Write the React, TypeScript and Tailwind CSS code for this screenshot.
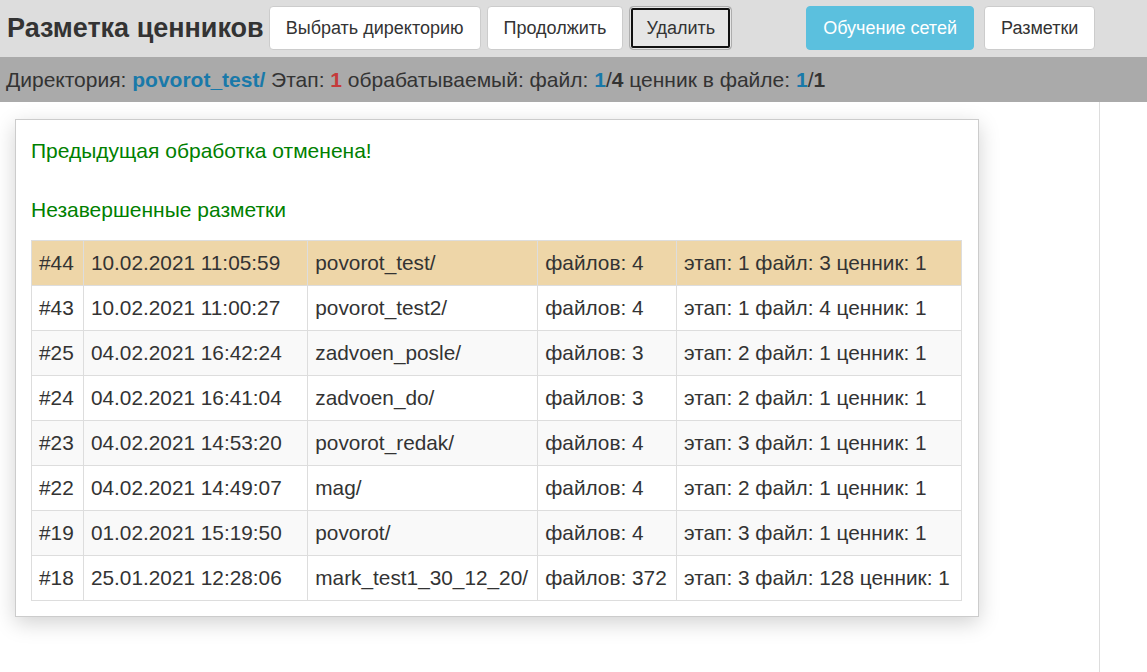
import React from 'react';

const rows = [
  ['#44', '10.02.2021 11:05:59', 'povorot_test/', 'файлов: 4', 'этап: 1 файл: 3 ценник: 1'],
  ['#43', '10.02.2021 11:00:27', 'povorot_test2/', 'файлов: 4', 'этап: 1 файл: 4 ценник: 1'],
  ['#25', '04.02.2021 16:42:24', 'zadvoen_posle/', 'файлов: 3', 'этап: 2 файл: 1 ценник: 1'],
  ['#24', '04.02.2021 16:41:04', 'zadvoen_do/', 'файлов: 3', 'этап: 2 файл: 1 ценник: 1'],
  ['#23', '04.02.2021 14:53:20', 'povorot_redak/', 'файлов: 4', 'этап: 3 файл: 1 ценник: 1'],
  ['#22', '04.02.2021 14:49:07', 'mag/', 'файлов: 4', 'этап: 2 файл: 1 ценник: 1'],
  ['#19', '01.02.2021 15:19:50', 'povorot/', 'файлов: 4', 'этап: 3 файл: 1 ценник: 1'],
  ['#18', '25.01.2021 12:28:06', 'mark_test1_30_12_20/', 'файлов: 372', 'этап: 3 файл: 128 ценник: 1'],
];

const colW = ['w-[52px]', 'w-[225px]', 'w-[230px]', 'w-[139px]', 'w-[285px]'];

const btn = 'h-[44px] px-4 rounded-[4px] border text-[18px]';

export default function App() {
  return (
    <div className="min-h-[672px] bg-white text-[#333] font-['Liberation_Sans',Arial,sans-serif]">
      <div className="h-[57px] bg-[#dddddd] flex items-center pl-[7px] pb-[1px]">
        <h1 className="text-[27px] font-bold text-[#333] mr-[5px] leading-none">Разметка ценников</h1>
        <div className="flex gap-[6px]">
          <button className={`${btn} bg-white border-[#ccc] text-[#333]`}>Выбрать директорию</button>
          <button className={`${btn} bg-white border-[#ccc] text-[#333]`}>Продолжить</button>
          <button className={`${btn} bg-[#e6e6e6] border-[#adadad] text-[#333] shadow-[inset_0_0_0_1px_#e6e6e6,inset_0_0_0_3px_#111]`}>
            Удалить
          </button>
        </div>
        <div className="flex gap-[10px] ml-[74px]">
          <button className={`${btn} bg-[#5bc0de] border-[#5bc0de] text-white`}>Обучение сетей</button>
          <button className={`${btn} bg-white border-[#ccc] text-[#333]`}>Разметки</button>
        </div>
      </div>
      <div className="h-[45px] bg-[#aaaaaa] flex items-center pl-[6px] text-[21px] text-[#333]">
        <span>
          Директория: <b className="text-[#1979a9]">povorot_test/</b> Этап: <b className="text-[#c53b3b]">1</b>{' '}
          обрабатываемый: файл: <b className="text-[#1979a9]">1</b>/<b>4</b> ценник в файле:{' '}
          <b className="text-[#1979a9]">1</b>/<b>1</b>
        </span>
      </div>
      <div className="flex">
        <div className="w-[1100px] border-r border-[#ddd] min-h-[570px] pt-[17px] pl-[15px]">
          <div className="w-[964px] border border-[#ccc] bg-white shadow-[0_6px_20px_rgba(0,0,0,0.18)] px-[15px] pt-[18px] pb-[15px]">
            <p className="text-[21px] leading-[26px] text-[#008000]">Предыдущая обработка отменена!</p>
            <p className="text-[21px] leading-[26px] text-[#008000] mt-[33px] mb-[17px]">Незавершенные разметки</p>
            <table className="w-[931px] border-collapse text-[20.8px] text-[#333]">
              <tbody>
                {rows.map((r, i) => (
                  <tr
                    key={r[0]}
                    className={i === 0 ? 'bg-[#eed6a8]' : i % 2 === 0 ? 'bg-[#f9f9f9]' : 'bg-white'}
                  >
                    {r.map((c, j) => (
                      <td key={j} className={`${colW[j]} h-[45px] border border-[#ddd] px-[7px] whitespace-nowrap`}>
                        {c}
                      </td>
                    ))}
                  </tr>
                ))}
              </tbody>
            </table>
          </div>
        </div>
        <div className="flex-1" />
      </div>
    </div>
  );
}
